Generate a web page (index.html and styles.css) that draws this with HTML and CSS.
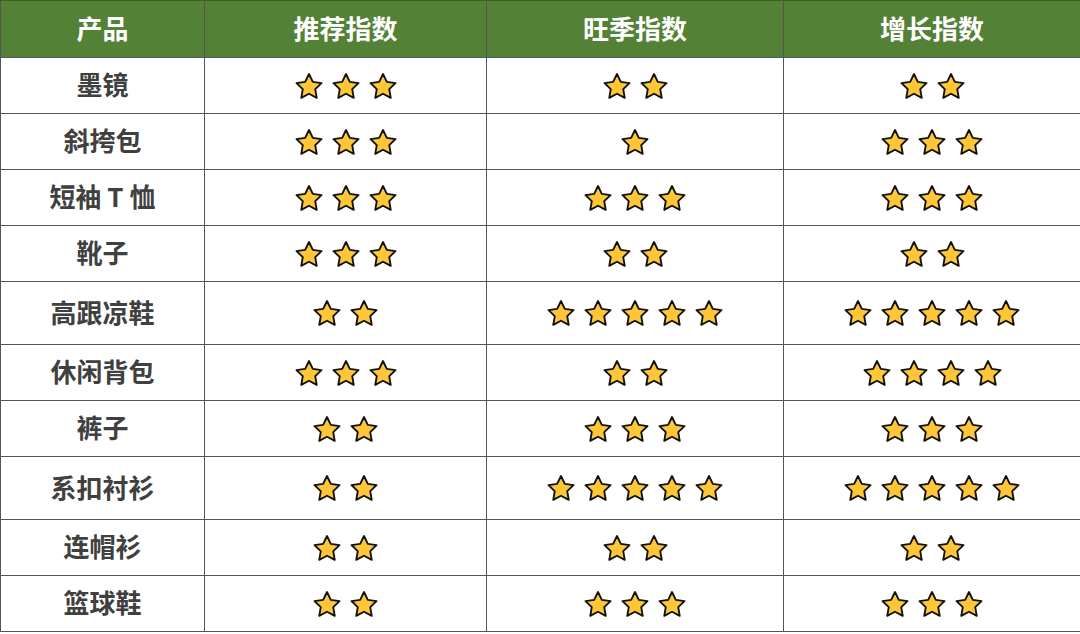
FILE: index.html
```html
<!DOCTYPE html>
<html lang="zh">
<head>
<meta charset="utf-8">
<link rel="stylesheet" href="styles.css">
</head>
<body>
<svg class="defs" width="0" height="0">
  <defs>
    <symbol id="star" viewBox="0 0 24 24" overflow="visible">
      <path d="M12 1.7L15.29 8.47 22.75 9.51 17.33 14.73 18.64 22.14 12 18.6 5.36 22.14 6.67 14.73 1.25 9.51 8.71 8.47z" fill="#FFC637" stroke="#111" stroke-width="1.6" stroke-linejoin="round"/>
    </symbol>
  </defs>
</svg>
<table class="tbl">
  <colgroup>
    <col class="c1"><col class="c2"><col class="c3"><col class="c4">
  </colgroup>
  <thead>
    <tr><th>产品</th><th>推荐指数</th><th>旺季指数</th><th>增长指数</th></tr>
  </thead>
  <tbody id="body"></tbody>
</table>
<script src="app.js"></script>
</body>
</html>
```
FILE: app.js
```js
const rows = [
  ["墨镜", 3, 2, 2],
  ["斜挎包", 3, 1, 3],
  ["短袖 T 恤", 3, 3, 3],
  ["靴子", 3, 2, 2],
  ["高跟凉鞋", 2, 5, 5, "tall"],
  ["休闲背包", 3, 2, 4],
  ["裤子", 2, 3, 3],
  ["系扣衬衫", 2, 5, 5, "tall"],
  ["连帽衫", 2, 2, 2],
  ["篮球鞋", 2, 3, 3]
];
const star = '<svg class="star" viewBox="0 0 24 24"><use href="#star"/></svg>';
const body = document.getElementById("body");
body.innerHTML = rows.map(r => {
  const cls = r[4] ? ' class="' + r[4] + '"' : '';
  const cells = [1, 2, 3].map(i => '<td><div class="stars">' + star.repeat(r[i]) + '</div></td>').join("");
  return '<tr' + cls + '><td class="name">' + r[0] + '</td>' + cells + '</tr>';
}).join("");
```
FILE: styles.css
```css
html, body {
  margin: 0;
  padding: 0;
  background: #ffffff;
}
body {
  font-family: "Noto Sans CJK SC", "Noto Sans", sans-serif;
}
.defs {
  position: absolute;
  width: 0;
  height: 0;
}
.tbl {
  border-collapse: collapse;
  table-layout: fixed;
  width: 1080px;
}
.c1 { width: 204px; }
.c2 { width: 282px; }
.c3 { width: 297px; }
.c4 { width: 297px; }
.tbl th,
.tbl td {
  border: 1px solid #555555;
  padding: 0;
  text-align: center;
  vertical-align: middle;
}
.tbl th {
  background: #538135;
  color: #ffffff;
  font-size: 26px;
  font-weight: 700;
  line-height: 1;
  height: 53px;
  padding-bottom: 3px;
  border-color: #3f5f2a #555555 #555555 #555555;
}
.tbl td {
  height: 55px;
}
.tbl tr.tall td {
  height: 62px;
}
.tbl td.name {
  color: #404040;
  font-size: 26px;
  font-weight: 700;
  line-height: 1;
  height: 52px;
  padding-bottom: 3px;
}
.tbl tr.tall td.name {
  height: 59px;
}
.stars {
  display: flex;
  justify-content: center;
  align-items: center;
  gap: 9px;
}
.star {
  width: 28px;
  height: 28px;
  display: block;
  overflow: visible;
}
```
